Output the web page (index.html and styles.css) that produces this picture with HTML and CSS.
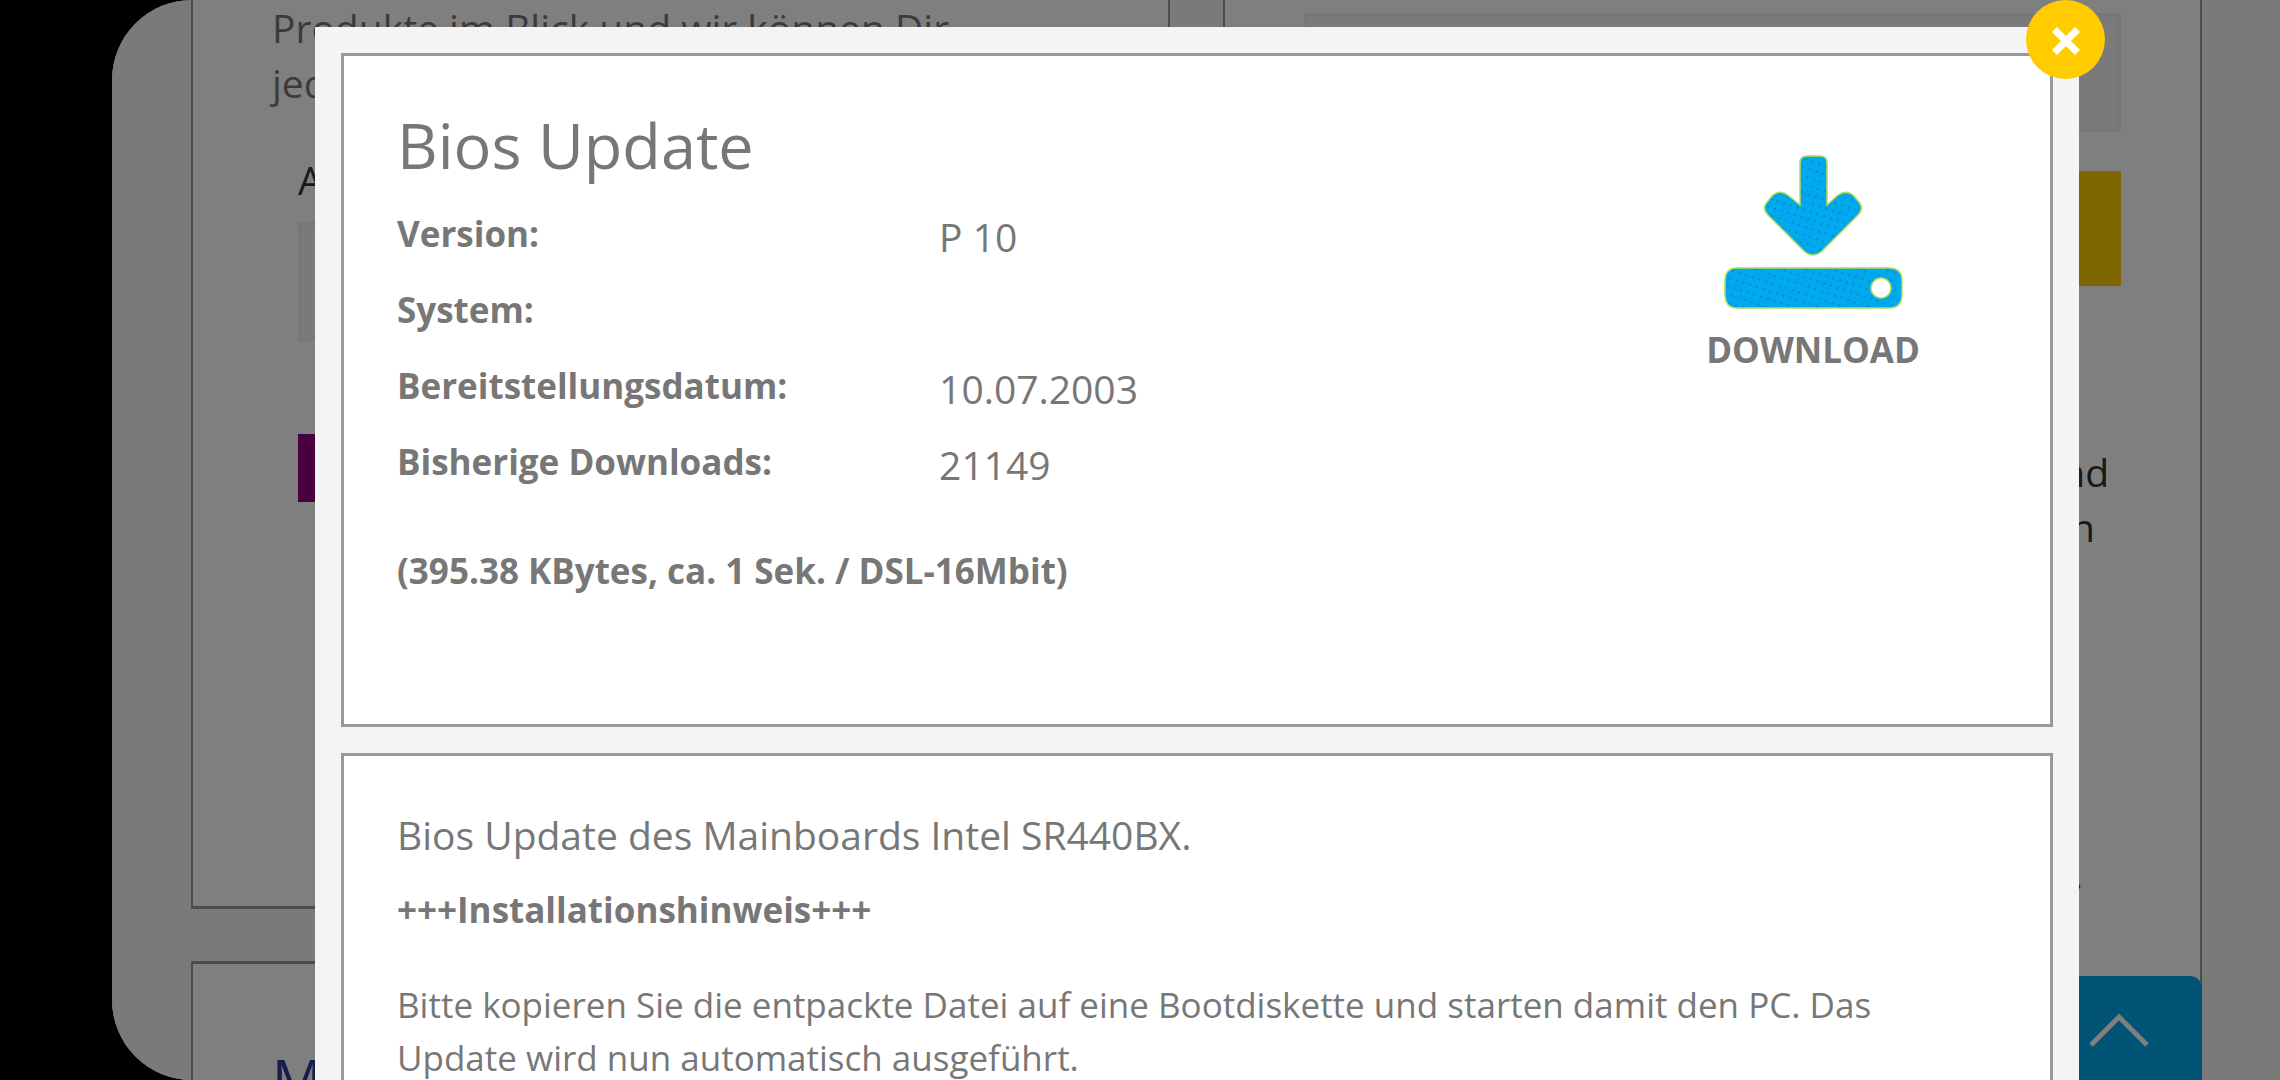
FILE: index.html
```html
<!DOCTYPE html>
<html lang="de">
<head>
<meta charset="utf-8">
<meta name="viewport" content="width=device-width, initial-scale=1">
<title>Bios Update</title>
<link rel="stylesheet" href="styles.css">
</head>
<body>
<div class="page">
  <main class="columns">
    <div class="column">
      <section class="panel">
        <p class="lead">Produkte im Blick und wir können Dir<br>jederzeit</p>
        <form class="form">
          <label class="label" for="article">Artikel</label>
          <input class="field" id="article" type="text">
          <button class="send" type="button" aria-label="Senden"></button>
        </form>
      </section>
      <section class="panel panel-next">
        <h2 class="panel-title">Mein</h2>
      </section>
    </div>
    <div class="column">
      <section class="panel panel-tall">
        <form class="search">
          <input class="field" type="text" aria-label="Suche">
          <button class="find" type="button" aria-label="Suchen"></button>
        </form>
        <div class="notes">
          <p class="note">und</p>
          <p class="note note-inset">den</p>
          <p class="note note-last">an.</p>
        </div>
      </section>
    </div>
  </main>
  <a class="to-top" href="#" aria-label="Nach oben">
    <svg class="chevron" viewBox="0 0 60 34" aria-hidden="true"><path d="M2 32 30 4 58 32"/></svg>
  </a>

  <div class="overlay">
    <div class="modal" role="dialog" aria-modal="true" aria-labelledby="dialog-title">
      <button class="close" type="button" aria-label="Schließen">
        <svg class="cross" viewBox="0 0 28 28" aria-hidden="true"><path d="M2.500 2.500 25.500 25.500M25.500 2.500 2.500 25.500"/></svg>
      </button>
      <section class="box box-main">
        <div class="info">
          <h1 class="title" id="dialog-title">Bios Update</h1>
          <dl class="facts">
            <dt>Version:</dt><dd>P 10</dd>
            <dt>System:</dt><dd></dd>
            <dt>Bereitstellungsdatum:</dt><dd>10.07.2003</dd>
            <dt>Bisherige Downloads:</dt><dd>21149</dd>
          </dl>
          <p class="size">(395.38 KBytes, ca. 1 Sek. / DSL-16Mbit)</p>
        </div>
        <a class="download" href="#">
          <svg class="download-icon" viewBox="0 0 180 154" aria-hidden="true">
            <defs>
              <pattern id="dots" width="7" height="8" patternUnits="userSpaceOnUse" patternTransform="rotate(18)">
                <rect width="7" height="8" fill="#00a8ec"/>
                <circle cx="3" cy="3" r="1" fill="#0a7ce0"/>
              </pattern>
            </defs>
            <g fill="url(#dots)" stroke="#b5dc5a" stroke-width="1.500">
              <path d="M84 1H97Q104 1 104 8V50L114 41Q122 34 130 40L135 46Q142 53 135 60L99 96Q90 104 81 96L45 60Q38 53 45 46L50 40Q58 34 66 41L77 50V8Q77 1 84 1Z"/>
              <path fill-rule="evenodd" d="M14 113H166Q179 113 179 126V139Q179 153 166 153H14Q2 153 2 139V126Q2 113 14 113ZM158 123A10 10 0 1 0 158 143A10 10 0 1 0 158 123Z"/>
            </g>
          </svg>
          <span>DOWNLOAD</span>
        </a>
      </section>
      <section class="box">
        <p class="intro">Bios Update des Mainboards Intel SR440BX.</p>
        <h2 class="hint">+++Installationshinweis+++</h2>
        <p class="text">Bitte kopieren Sie die entpackte Datei auf eine Bootdiskette und starten damit den PC. Das Update wird nun automatisch ausgeführt.</p>
      </section>
    </div>
  </div>
</div>
</body>
</html>
```
FILE: styles.css
```css
* {
  box-sizing: border-box;
}

body {
  margin: 0;
  padding-left: 112px;
  background: #000;
  color: #777;
  font-family: "Open Sans", "Noto Sans", sans-serif;
  font-size: 35px;
}

h1, h2, p, dl, dd {
  margin: 0;
}

.page {
  position: relative;
  height: 100vh;
  overflow: hidden;
  border-radius: 80px 0 0 80px;
  background: #f4f4f4;
}

/* Page behind the dialog */

.columns {
  display: flex;
  gap: 53px;
  padding: 0 78px 0 79px;
}

.column {
  flex: 1;
  display: flex;
  flex-direction: column;
  gap: 52px;
}

.panel {
  padding: 0 79px 80px;
  border: solid #999;
  border-width: 0 2px 3px;
  background: #fff;
}

.panel-next {
  border-top-width: 3px;
  padding-top: 80px;
}

.panel-tall {
  min-height: 100vh;
}

.panel-title {
  color: #2e3c94;
  font-size: 56px;
  font-weight: 400;
  line-height: 70px;
}

.lead {
  font-size: 39px;
  line-height: 55px;
}

.form {
  display: flex;
  flex-direction: column;
  min-height: 716px;
  padding: 42px 26px 0;
}

.label {
  margin-bottom: 15px;
  color: #333;
  font-size: 39px;
  line-height: 55px;
}

.field {
  width: 100%;
  height: 119px;
  border: 3px solid #efefef;
  background: #f4f4f4;
}

.send {
  height: 68px;
  margin-top: 93px;
  border: 0;
  background: #920082;
}

.search {
  display: flex;
  flex-direction: column;
  gap: 39px;
  padding-top: 13px;
}

.find {
  height: 115px;
  border: 0;
  background: #fc0;
}

.notes {
  padding: 158px 12px 0 0;
  color: #333;
  font-size: 39px;
  line-height: 55px;
  text-align: right;
}

.note-inset {
  padding-right: 14px;
}

.note-last {
  padding: 292px 26px 0 0;
}

.to-top {
  position: absolute;
  right: 78px;
  bottom: 0;
  display: flex;
  justify-content: center;
  width: 166px;
  height: 104px;
  padding-top: 37px;
  border-radius: 12px 12px 0 0;
  background: #00a6e8;
}

.chevron {
  width: 60px;
  height: 34px;
  fill: none;
  stroke: #fff;
  stroke-width: 5;
}

/* Dialog */

.overlay {
  position: absolute;
  inset: 0;
  overflow: hidden;
  background: rgba(0, 0, 0, .5);
}

.modal {
  position: relative;
  display: flex;
  flex-direction: column;
  gap: 26px;
  min-height: 100%;
  margin: 27px 201px 0 203px;
  padding: 26px;
  background: #f4f4f4;
}

.close {
  position: absolute;
  top: -27px;
  right: -26px;
  display: grid;
  place-items: center;
  width: 79px;
  height: 79px;
  padding: 2px 0 0;
  border: 0;
  border-radius: 50%;
  background: #fc0;
}

.cross {
  width: 28px;
  height: 28px;
  fill: none;
  stroke: #fff;
  stroke-width: 7;
}

.box {
  padding: 53px;
  border: 3px solid #999;
  background: #fff;
}

.box-main {
  display: flex;
}

.info {
  flex: 1;
  padding-bottom: 73px;
}

.title {
  margin-bottom: 26px;
  font-size: 63px;
  font-weight: 400;
  line-height: 72px;
}

.facts {
  display: grid;
  grid-template-columns: 44% 1fr;
  grid-auto-rows: 76px;
}

.facts dt {
  font-weight: 700;
  line-height: 54px;
}

.facts dd {
  font-size: 39px;
  line-height: 60px;
}

.size {
  margin-top: 33px;
  font-weight: 700;
  line-height: 54px;
}

.download {
  display: flex;
  flex-direction: column;
  align-items: center;
  gap: 14px;
  width: 23%;
  padding-top: 46px;
  color: inherit;
  font-weight: 700;
  line-height: 54px;
  text-decoration: none;
}

.download-icon {
  width: 180px;
  height: 154px;
}

.intro {
  margin-bottom: 22px;
  font-size: 39px;
  line-height: 52px;
}

.hint {
  margin-bottom: 42px;
  font-size: 35px;
  font-weight: 700;
  line-height: 53px;
}

.text {
  line-height: 53px;
}
```
